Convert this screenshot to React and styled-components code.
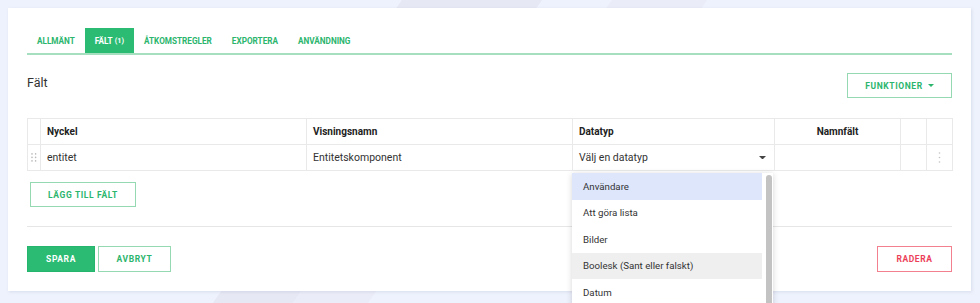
import React from 'react';
import styled, { createGlobalStyle } from 'styled-components';

const GlobalStyle = createGlobalStyle`
  html, body {
    margin: 0;
    padding: 0;
    overflow: hidden;
  }
  body {
    background: #eef2fc;
    font-family: Roboto, "Liberation Sans", sans-serif;
    color: #333;
  }
`;

const Page = styled.div`
  position: relative;
  padding: 8px;
  min-height: 287px;
`;

// faint diagonal bands in the page background
const Band = styled.div`
  position: absolute;
  top: ${p => p.top}px;
  left: ${p => p.left}px;
  width: ${p => p.w}px;
  height: ${p => p.h}px;
  background: ${p => p.color};
  transform: skewX(-35deg);
  z-index: 0;
`;

const Card = styled.div`
  position: relative;
  z-index: 1;
  width: 963px;
  box-sizing: border-box;
  background: #fff;
  padding: 20px 19px 19px 19px;
  box-shadow: 1px 1px 3px rgba(120, 130, 170, 0.18);
`;

const Tabs = styled.div`
  display: flex;
  border-bottom: 2px solid #a6dfbf;
`;

const Tab = styled.div`
  height: 25px;
  padding: 0 10px;
  display: flex;
  align-items: center;
  font-size: 8.2px;
  font-weight: 700;
  text-transform: uppercase;
  color: ${p => (p.active ? '#fff' : '#2bb56d')};
  background: ${p => (p.active ? '#2bbb73' : 'transparent')};
  small {
    font-size: 7.3px;
    margin-left: 2px;
  }
`;

const Header = styled.div`
  display: flex;
  justify-content: space-between;
  align-items: flex-start;
  margin-top: 18px;
`;

const Title = styled.h2`
  margin: 0;
  font-size: 12.5px;
  font-weight: 400;
  color: #333;
  line-height: 15px;
  margin-top: 2px;
`;

const OutlineButton = styled.button`
  box-sizing: border-box;
  height: ${p => p.h || 25}px;
  width: ${p => p.w}px;
  padding: 0;
  background: #fff;
  border: 1px solid ${p => (p.danger ? '#f3808f' : '#95d9b2')};
  color: ${p => (p.danger ? '#ec3f5a' : '#2bb56d')};
  font-family: Roboto, "Liberation Sans", sans-serif;
  font-size: 8.5px;
  font-weight: 700;
  letter-spacing: 0.6px;
  text-transform: uppercase;
  display: inline-flex;
  align-items: center;
  justify-content: center;
  gap: 5px;
  margin-left: ${p => p.ml || 0}px;
`;

const SolidButton = styled(OutlineButton)`
  background: #2bbb73;
  border-color: #26b56c;
  color: #fff;
`;

const Table = styled.table`
  margin-top: 20px;
  width: 925px;
  border-collapse: collapse;
  table-layout: fixed;
  font-size: 10.5px;
  th, td {
    border: 1px solid #e9e9e9;
    height: 25px;
    padding: 0 6px;
    text-align: left;
    color: #333;
  }
  th {
    font-weight: 700;
    color: #222;
    font-size: 10px;
  }
`;

const CenterTh = styled.th`
  && { text-align: center; }
`;

const IconCell = styled.td`
  && {
    padding: 0;
    text-align: center;
    vertical-align: middle;
  }
  svg { display: block; margin: 0 auto; }
`;

const SelectCell = styled.td`
  position: relative;
`;

const SelectBox = styled.div`
  display: flex;
  justify-content: space-between;
  align-items: center;
  padding-right: 2px;
`;

const Dropdown = styled.div`
  position: absolute;
  z-index: 5;
  top: 28px;
  left: -1px;
  width: 201px;
  height: 150px;
  display: flex;
  background: #fff;
  box-shadow: 0 1px 6px rgba(0, 0, 0, 0.16);
  overflow: hidden;
`;

const OptionList = styled.div`
  flex: 1;
`;

const ScrollTrack = styled.div`
  width: 11px;
  padding: 2px 1px 0 4px;
  box-sizing: border-box;
  background: #fff;
`;

const ScrollThumb = styled.div`
  height: 140px;
  border-radius: 3px;
  background: #c3c3c3;
`;

const Option = styled.div`
  height: 26.5px;
  display: flex;
  align-items: center;
  padding-left: 11px;
  font-size: 9.7px;
  color: #333;
  background: ${p => (p.selected ? '#dde6fb' : p.hover ? '#efeff0' : '#fff')};
`;

const Row = styled.div`
  display: flex;
  align-items: center;
  margin-top: ${p => p.mt || 0}px;
  margin-left: ${p => p.ml || 0}px;
`;

const Divider = styled.div`
  height: 1px;
  background: #e6e6e6;
  margin-top: 19px;
`;

const Footer = styled.div`
  display: flex;
  justify-content: space-between;
  margin-top: 19px;
`;

const Caret = ({ color = '#444', w = 7 }) => (
  <svg width={w} height={w / 2} viewBox="0 0 8 4">
    <path d="M0 0 L8 0 L4 4 Z" fill={color} />
  </svg>
);

const DragDots = () => (
  <svg width="6" height="9" viewBox="0 0 6 9">
    {[0, 3.5, 7].map(y => [0.7, 4.3].map(x => (
      <circle key={`${x}-${y}`} cx={x + 0.3} cy={y + 0.9} r="0.8" fill="#b9b9b9" />
    )))}
  </svg>
);

const Kebab = () => (
  <svg width="3" height="11" viewBox="0 0 3 11">
    {[1, 5.5, 10].map(y => (
      <circle key={y} cx="1.5" cy={y} r="0.8" fill="#c2c2c2" />
    ))}
  </svg>
);

const options = [
  'Användare',
  'Att göra lista',
  'Bilder',
  'Boolesk (Sant eller falskt)',
  'Datum',
];

function App() {
  return (
    <Page>
      <GlobalStyle />
      <Band top={-10} left={395} w={140} h={40} color="#e6e8f4" />
      <Band top={-10} left={605} w={95} h={40} color="#eaecf7" />
      <Band top={280} left={215} w={80} h={40} color="#e6e8f4" />
      <Band top={280} left={295} w={75} h={40} color="#eaecf7" />
      <Card>
        <Tabs>
          <Tab>Allmänt</Tab>
          <Tab active>Fält<small>(1)</small></Tab>
          <Tab>Åtkomstregler</Tab>
          <Tab>Exportera</Tab>
          <Tab>Användning</Tab>
        </Tabs>

        <Header>
          <Title>Fält</Title>
          <OutlineButton w={105}>
            Funktioner <Caret color="#2bb56d" w={6} />
          </OutlineButton>
        </Header>

        <Table>
          <colgroup>
            <col style={{ width: 13 }} />
            <col style={{ width: 266 }} />
            <col style={{ width: 266 }} />
            <col style={{ width: 202 }} />
            <col style={{ width: 126 }} />
            <col style={{ width: 26 }} />
            <col style={{ width: 26 }} />
          </colgroup>
          <thead>
            <tr>
              <th />
              <th>Nyckel</th>
              <th>Visningsnamn</th>
              <th>Datatyp</th>
              <CenterTh>Namnfält</CenterTh>
              <th />
              <th />
            </tr>
          </thead>
          <tbody>
            <tr>
              <IconCell><DragDots /></IconCell>
              <td>entitet</td>
              <td>Entitetskomponent</td>
              <SelectCell>
                <SelectBox>
                  Välj en datatyp
                  <Caret />
                </SelectBox>
                <Dropdown>
                  <OptionList>
                    {options.map((o, i) => (
                      <Option key={o} selected={i === 0} hover={i === 3}>{o}</Option>
                    ))}
                  </OptionList>
                  <ScrollTrack>
                    <ScrollThumb />
                  </ScrollTrack>
                </Dropdown>
              </SelectCell>
              <td />
              <td />
              <IconCell><Kebab /></IconCell>
            </tr>
          </tbody>
        </Table>

        <Row mt={11} ml={3}>
          <OutlineButton w={106}>Lägg till fält</OutlineButton>
        </Row>

        <Divider />

        <Footer>
          <Row>
            <SolidButton w={68} h={26}>Spara</SolidButton>
            <OutlineButton w={73} h={26} ml={3}>Avbryt</OutlineButton>
          </Row>
          <OutlineButton w={75} h={26} danger>Radera</OutlineButton>
        </Footer>
      </Card>
    </Page>
  );
}

export default App;
